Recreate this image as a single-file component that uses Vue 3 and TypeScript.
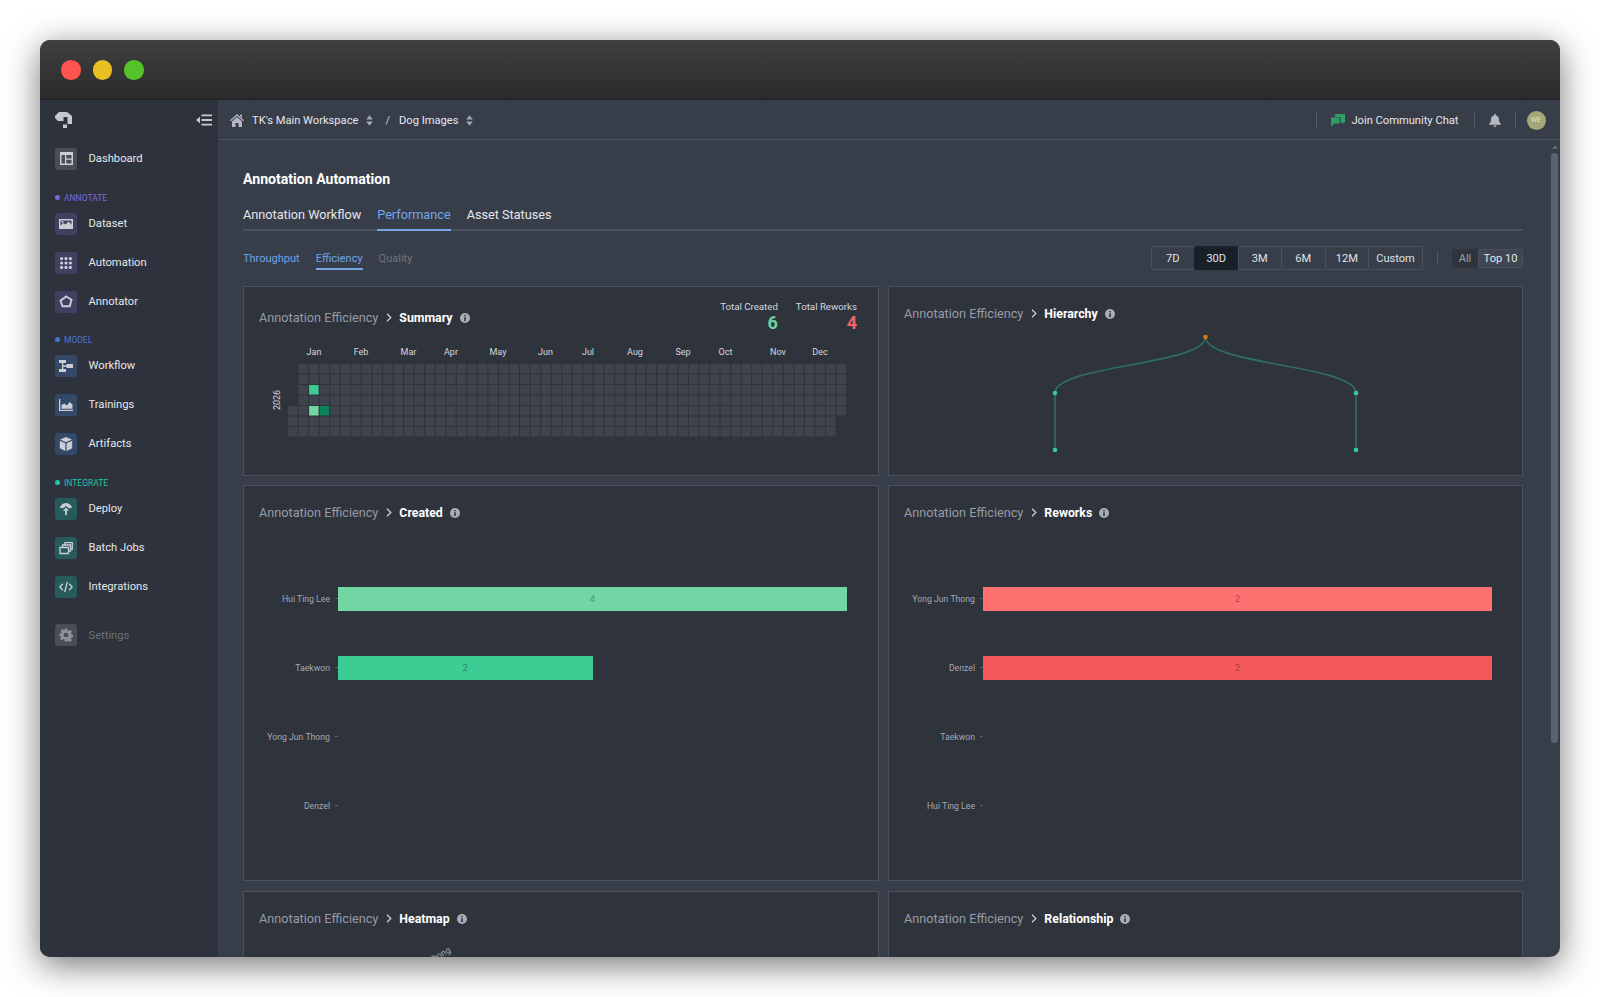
<script setup lang="ts">
interface NavItem { label: string; icon: string; dim?: boolean }
interface NavGroup { title: string; tone: string; items: NavItem[] }

const groups: NavGroup[] = [
  { title: 'ANNOTATE', tone: 'violet', items: [
    { label: 'Dataset', icon: 'image' }, { label: 'Automation', icon: 'dots' }, { label: 'Annotator', icon: 'poly' } ] },
  { title: 'MODEL', tone: 'blue', items: [
    { label: 'Workflow', icon: 'flow' }, { label: 'Trainings', icon: 'area' }, { label: 'Artifacts', icon: 'cube' } ] },
  { title: 'INTEGRATE', tone: 'teal', items: [
    { label: 'Deploy', icon: 'deploy' }, { label: 'Batch Jobs', icon: 'batch' }, { label: 'Integrations', icon: 'code' } ] },
]

const months = [
  ['Jan', 55], ['Feb', 102], ['Mar', 149.5], ['Apr', 192], ['May', 239], ['Jun', 286.5],
  ['Jul', 329], ['Aug', 376], ['Sep', 424], ['Oct', 466.5], ['Nov', 519], ['Dec', 561],
] as [string, number][]

const cellFill: Record<string, string> = { '2-2': '#3dcc93', '2-4': '#72d5a4', '3-4': '#0b8457' }
const cells: { x: number; y: number; fill: string; key: string }[] = []
for (let c = 0; c < 53; c++) {
  for (let r = 0; r < 7; r++) {
    if (c === 0 && r < 4) continue
    if (c === 52 && r > 4) continue
    const key = `${c}-${r}`
    cells.push({ key, x: 29 + c * 10.55, y: 22 + r * 10.5, fill: cellFill[key] || '#3e434e' })
  }
}

const barCharts = [
  { title: 'Created', rows: [
    { name: 'Hui Ting Lee', value: 4, color: '#72d5a4', text: '#4a9c78' },
    { name: 'Taekwon', value: 2, color: '#3dcc93', text: '#2c8a66' },
    { name: 'Yong Jun Thong', value: 0, color: '', text: '' },
    { name: 'Denzel', value: 0, color: '', text: '' } ], max: 4 },
  { title: 'Reworks', rows: [
    { name: 'Yong Jun Thong', value: 2, color: '#ff7070', text: '#b04c50' },
    { name: 'Denzel', value: 2, color: '#f55858', text: '#a83e42' },
    { name: 'Taekwon', value: 0, color: '', text: '' },
    { name: 'Hui Ting Lee', value: 0, color: '', text: '' } ], max: 2 },
]

const ranges = ['7D', '30D', '3M', '6M', '12M', 'Custom']
</script>

<template>
  <div class="page">
    <div class="window">
      <header class="titlebar">
        <span class="light red"></span><span class="light yellow"></span><span class="light green"></span>
      </header>
      <div class="body">
        <aside class="sidebar">
          <div class="brand">
            <svg class="logo" width="18" height="18" viewBox="0 0 18 18" fill="#c4c8cf">
              <path d="M4 1H12L17 5V13H12.500V6H8.500V10H3L0 7V5L4 1ZM8 13.500h4V17H8z" />
            </svg>
            <svg width="16" height="12" viewBox="0 0 16 12" fill="#c4c8cf">
              <path d="M0 6l4-3.2v6.4zM5.5 0.5H16v1.8H5.500zM5.500 5.100H16v1.800H5.500zM5.500 9.700H16v1.800H5.500z" />
            </svg>
          </div>
          <div class="nav-item">
            <span class="nav-icon grey">
              <svg width="13" height="13" viewBox="0 0 13 13" fill="#c9cdd4"><path fill-rule="evenodd" d="M0 0h13v13H0zM1.500 3v8.500H5V3zM6.300 3v3.500h5.200V3zM6.300 7.800v3.700h5.200V7.800z" /></svg>
            </span>
            <span class="nav-label">Dashboard</span>
          </div>
          <section v-for="g in groups" :key="g.title" class="group">
            <div class="group-title" :class="g.tone"><i></i>{{ g.title }}</div>
            <div v-for="it in g.items" :key="it.label" class="nav-item">
              <span class="nav-icon" :class="g.tone">
                <svg width="14" height="14" viewBox="0 0 14 14" fill="#c9cdd4">
                  <path v-if="it.icon === 'image'" fill-rule="evenodd" d="M0 2h14v10H0zM1.500 3.500v5l3-2.500 2 1.500 3-3 3 3v-4zM3.500 4a1 1 0 100 2 1 1 0 000-2z" />
                  <template v-else-if="it.icon === 'dots'">
                    <template v-for="r in 3" :key="r">
                      <circle v-for="c in 3" :key="c" :cx="2.600 + (c - 1) * 4.400" :cy="2.600 + (r - 1) * 4.400" r="1.600" />
                    </template>
                  </template>
                  <path v-else-if="it.icon === 'poly'" d="M7.300 1.500l5.200 3.100-1.700 6.600H3.500L1.500 5.600z" fill="none" stroke="#c9cdd4" stroke-width="1.900" />
                  <path v-else-if="it.icon === 'flow'" d="M0 1h7v3H0zM7.500 5h6.500v4H7.500zM0 10h7v3H0zM3 4h1.300v6H3zM3 6.300h4.500v1.400H3z" />
                  <path v-else-if="it.icon === 'area'" d="M0 1h1.300v10.700H14V13H0zM2.500 10.700V7l2.800-1.500 2.700 2L10.500 4l3 2.500v4.200z" />
                  <path v-else-if="it.icon === 'cube'" d="M7 0l6 2.600L7 5.200 1 2.600zM.8 3.800l5.600 2.400V14L.8 11.300zM13.200 3.800L7.600 6.200V14l5.600-2.700z" />
                  <path v-else-if="it.icon === 'deploy'" d="M7 1C3.800 1 1.500 3.200.7 6.500c1.100-.9 2.200-.9 3.100 0 .5-.5 1-.9 1.500-1L7 3.800l1.700 1.700c.5.100 1 .5 1.500 1 .9-.9 2-.9 3.100 0C12.500 3.200 10.200 1 7 1zM7 5.600L3.900 8.700h2.200V13h1.800V8.700h2.200z" />
                  <path v-else-if="it.icon === 'batch'" fill="none" stroke="#c9cdd4" stroke-width="1.300" d="M1 6.500h8.500v6H1zM3.500 6.500V4h8v6h-2M6 4V1.700h7.300V8h-1.800" />
                  <path v-else-if="it.icon === 'code'" fill="none" stroke="#c9cdd4" stroke-width="1.400" d="M3.800 3.800L.9 7l2.900 3.200M10.200 3.800L13.100 7l-2.900 3.200M8.300 1.800L5.700 12.200" />
                </svg>
              </span>
              <span class="nav-label">{{ it.label }}</span>
            </div>
          </section>
          <div class="nav-item settings">
            <span class="nav-icon grey">
              <svg width="14" height="14" viewBox="0 0 24 24" fill="#8c919a"><path fill-rule="evenodd" d="M10 1h4l.7 3.200 2 .8 2.800-1.800 2.800 2.800-1.800 2.800.8 2 3.200.7v4l-3.200.7-.8 2 1.800 2.800-2.800 2.800-2.800-1.800-2 .8L14 23h-4l-.7-3.200-2-.8-2.800 1.800-2.800-2.800 1.800-2.800-.8-2L.5 14v-4l3.200-.7.8-2L2.700 4.500l2.800-2.800 2.800 1.800 2-.8zM12 8a4 4 0 100 8 4 4 0 000-8z" /></svg>
            </span>
            <span class="nav-label">Settings</span>
          </div>
        </aside>

        <div class="main">
          <div class="topbar">
            <svg class="home" width="14" height="13" viewBox="0 0 14 13" fill="#b4b9c1">
              <path d="M7 0l7 6.300-.8.900L7 1.700.8 7.200 0 6.300zM10 .8h2v3l-2-1.800zM7 3l5 4.400V13H8.500V9h-3v4H2V7.400z" />
            </svg>
            <span class="crumb">TK's Main Workspace</span>
            <svg class="updown" width="7" height="11" viewBox="0 0 8 12" fill="#a3a8b1"><path d="M4 0l3.800 4.800H.2zM4 12L.2 7.200h7.600z" /></svg>
            <span class="slash">/</span>
            <span class="crumb">Dog Images</span>
            <svg class="updown" width="7" height="11" viewBox="0 0 8 12" fill="#a3a8b1"><path d="M4 0l3.800 4.800H.2zM4 12L.2 7.200h7.600z" /></svg>
            <span class="spacer"></span>
            <i class="vbar"></i>
            <svg class="chat" width="14" height="13" viewBox="0 0 14 13" fill="#2f9e64">
              <path d="M4 0h10v8.500h-1.500V10L10.800 8.500H9.500V3H4z" /><path d="M0 3.500h8.500v6H3L0 13z" />
            </svg>
            <span class="crumb chat-text">Join Community Chat</span>
            <i class="vbar"></i>
            <svg class="bell" width="12" height="13" viewBox="0 0 12 13" fill="#b4b9c1">
              <path d="M6 0c.6 0 1 .4 1 1v.5c2 .5 3 2 3 4 0 2 .5 3 2 4.500v.7H0V10c1.500-1.500 2-2.500 2-4.500s1-3.500 3-4V1c0-.6.4-1 1-1zM4.500 11.500h3C7.500 12.400 6.800 13 6 13s-1.500-.6-1.500-1.500z" />
            </svg>
            <i class="vbar"></i>
            <span class="avatar">WE</span>
          </div>

          <div class="scroll">
            <h1 class="page-title">Annotation Automation</h1>
            <nav class="tabs">
              <span>Annotation Workflow</span>
              <span class="on">Performance</span>
              <span>Asset Statuses</span>
            </nav>
            <div class="filters">
              <span class="sub blue">Throughput</span>
              <span class="sub blue on">Efficiency</span>
              <span class="sub muted">Quality</span>
              <span class="spacer"></span>
              <div class="ranges">
                <button v-for="r in ranges" :key="r" class="range" :class="{ active: r === '30D', wide: r === 'Custom' }">{{ r }}</button>
              </div>
              <i class="vbar small"></i>
              <div class="scope">
                <span class="scope-all">All</span>
                <span class="scope-top">Top 10</span>
              </div>
            </div>

            <div class="grid">
              <article class="card summary">
                <div class="card-head between">
                  <div class="heading">
                    <span class="crumb-dim">Annotation Efficiency</span>
                    <svg class="chev" width="6" height="9" viewBox="0 0 6 9"><path d="M1 .8L4.800 4.500 1 8.200" fill="none" stroke="#c9cdd4" stroke-width="1.300" /></svg>
                    <b>Summary</b>
                    <svg class="info" width="10" height="10" viewBox="0 0 10 10"><circle cx="5" cy="5" r="5" fill="#a8adb6" /><path d="M4.200 2h1.600v1.300H4.200zM4.200 4.200h1.600V8H4.200z" fill="#2f333c" /></svg>
                  </div>
                  <div class="totals">
                    <div><small>Total Created</small><strong class="good">6</strong></div>
                    <div><small>Total Reworks</small><strong class="bad">4</strong></div>
                  </div>
                </div>
                <svg class="heat" width="600" height="100" viewBox="0 0 600 100">
                  <text v-for="m in months" :key="m[0]" :x="m[1]" y="13" text-anchor="middle" class="month">{{ m[0] }}</text>
                  <text x="0" y="0" text-anchor="middle" class="year" transform="translate(21 58) rotate(-90)">2026</text>
                  <rect v-for="c in cells" :key="c.key" :x="c.x" :y="c.y" width="9.500" height="9.500" :fill="c.fill" />
                </svg>
              </article>

              <article class="card">
                <div class="card-head near">
                  <div class="heading">
                    <span class="crumb-dim">Annotation Efficiency</span>
                    <svg class="chev" width="6" height="9" viewBox="0 0 6 9"><path d="M1 .8L4.800 4.500 1 8.200" fill="none" stroke="#c9cdd4" stroke-width="1.300" /></svg>
                    <b>Hierarchy</b>
                    <svg class="info" width="10" height="10" viewBox="0 0 10 10"><circle cx="5" cy="5" r="5" fill="#a8adb6" /><path d="M4.200 2h1.600v1.300H4.200zM4.200 4.200h1.600V8H4.200z" fill="#2f333c" /></svg>
                  </div>
                </div>
                <svg class="tree" width="634" height="130" viewBox="0 0 634 130">
                  <g fill="none" stroke="#2f6f5c" stroke-width="1.600">
                    <path d="M316.500 7C316.500 35 166 35 166 63" />
                    <path d="M316.500 7C316.500 35 467 35 467 63" />
                    <path d="M166 63V120M467 63V120" />
                  </g>
                  <circle cx="316.500" cy="7" r="2.300" fill="#d9791c" />
                  <circle cx="166" cy="63" r="2.300" fill="#34cc8f" />
                  <circle cx="467" cy="63" r="2.300" fill="#34cc8f" />
                  <circle cx="166" cy="120" r="2.300" fill="#34cc8f" />
                  <circle cx="467" cy="120" r="2.300" fill="#34cc8f" />
                </svg>
              </article>

              <article v-for="chart in barCharts" :key="chart.title" class="card">
                <div class="card-head">
                  <div class="heading">
                    <span class="crumb-dim">Annotation Efficiency</span>
                    <svg class="chev" width="6" height="9" viewBox="0 0 6 9"><path d="M1 .8L4.800 4.500 1 8.200" fill="none" stroke="#c9cdd4" stroke-width="1.300" /></svg>
                    <b>{{ chart.title }}</b>
                    <svg class="info" width="10" height="10" viewBox="0 0 10 10"><circle cx="5" cy="5" r="5" fill="#a8adb6" /><path d="M4.200 2h1.600v1.300H4.200zM4.200 4.200h1.600V8H4.200z" fill="#2f333c" /></svg>
                  </div>
                </div>
                <div class="bars">
                  <div v-for="row in chart.rows" :key="row.name" class="bar-row">
                    <span class="bar-name">{{ row.name }}</span>
                    <i class="tick"></i>
                    <div class="bar-track">
                      <div v-if="row.value" class="bar" :style="{ width: (row.value / chart.max) * 100 + '%', background: row.color, color: row.text }">{{ row.value }}</div>
                    </div>
                  </div>
                </div>
              </article>

              <article class="card last-row">
                <div class="card-head">
                  <div class="heading">
                    <span class="crumb-dim">Annotation Efficiency</span>
                    <svg class="chev" width="6" height="9" viewBox="0 0 6 9"><path d="M1 .8L4.800 4.500 1 8.200" fill="none" stroke="#c9cdd4" stroke-width="1.300" /></svg>
                    <b>Heatmap</b>
                    <svg class="info" width="10" height="10" viewBox="0 0 10 10"><circle cx="5" cy="5" r="5" fill="#a8adb6" /><path d="M4.200 2h1.600v1.300H4.200zM4.200 4.200h1.600V8H4.200z" fill="#2f333c" /></svg>
                  </div>
                </div>
                <span class="axis-label">Yong Jun Thong</span>
              </article>

              <article class="card last-row">
                <div class="card-head">
                  <div class="heading">
                    <span class="crumb-dim">Annotation Efficiency</span>
                    <svg class="chev" width="6" height="9" viewBox="0 0 6 9"><path d="M1 .8L4.800 4.500 1 8.200" fill="none" stroke="#c9cdd4" stroke-width="1.300" /></svg>
                    <b>Relationship</b>
                    <svg class="info" width="10" height="10" viewBox="0 0 10 10"><circle cx="5" cy="5" r="5" fill="#a8adb6" /><path d="M4.200 2h1.600v1.300H4.200zM4.200 4.200h1.600V8H4.200z" fill="#2f333c" /></svg>
                  </div>
                </div>
              </article>
            </div>

            <div class="scrollbar"><i class="arrow"></i><i class="thumb"></i></div>
          </div>
        </div>
      </div>
    </div>
  </div>
</template>

<style scoped>
.page {
  height: 997px;
  box-sizing: border-box;
  padding: 40px;
  background: #fff;
  overflow: hidden;
  font-family: Roboto, "Liberation Sans", sans-serif;
  color: #e4e7ec;
}
.window {
  height: 917px;
  border-radius: 10px;
  overflow: hidden;
  box-shadow: 0 8px 34px rgba(0, 0, 0, 0.55);
  display: flex;
  flex-direction: column;
  background: #383e49;
}
.titlebar {
  height: 60px;
  flex: none;
  box-sizing: border-box;
  padding: 1px 0 0 21px;
  display: flex;
  align-items: center;
  gap: 12px;
  background: linear-gradient(#404040, #2b2b2b);
  border-bottom: 1px solid #1f2126;
}
.light { width: 19.500px; height: 19.500px; border-radius: 50%; }
.red { background: #ff5350; }
.yellow { background: #e9bf22; }
.green { background: #53c22b; }
.body { flex: 1; display: flex; min-height: 0; }

.sidebar {
  width: 178px;
  flex: none;
  box-sizing: border-box;
  background: #2e323c;
  padding: 0 6px 0 15px;
}
.brand {
  height: 39px;
  display: flex;
  align-items: center;
  justify-content: space-between;
}
.nav-item { height: 39px; display: flex; align-items: center; gap: 11.500px; }
.nav-icon {
  width: 22px;
  height: 22px;
  flex: none;
  border-radius: 3px;
  display: flex;
  align-items: center;
  justify-content: center;
}
.nav-icon.grey { background: #484d57; }
.nav-icon.violet { background: #433f63; }
.nav-icon.blue { background: #344868; }
.nav-icon.teal { background: #265a5b; }
.nav-label { font-size: 11.200px; color: #e4e7ec; }
.group { margin-top: 13px; }
.group:nth-child(4) { margin-top: 12px; }
.group-title {
  height: 13px;
  display: flex;
  align-items: center;
  gap: 4px;
  font-size: 8.500px;
}
.group-title i { width: 5px; height: 5px; border-radius: 50%; background: currentColor; }
.group-title.violet { color: #7a67e0; }
.group-title.blue { color: #4a74d9; }
.group-title.teal { color: #1fc7a5; }
.settings { margin-top: 9.500px; }
.settings .nav-label { color: #6c717a; }

.main { flex: 1; min-width: 0; display: flex; flex-direction: column; }
.topbar {
  height: 40px;
  flex: none;
  box-sizing: border-box;
  border-bottom: 1px solid #4f5560;
  display: flex;
  align-items: center;
  padding: 1px 14.500px 0 12px;
}
.home { margin-right: 8px; }
.crumb { font-size: 11.150px; color: #e4e7ec; }
.updown { margin-left: 8px; }
.slash { margin: 0 9px 0 12px; font-size: 11.150px; color: #c9cdd4; }
.spacer { flex: 1; }
.vbar { width: 1px; height: 17px; background: #555b66; }
.chat { margin: 0 6px 0 14px; }
.chat-text { margin-right: 15px; }
.bell { margin: 0 14px; }
.avatar {
  margin-left: 11px;
  width: 19px;
  height: 19px;
  border-radius: 50%;
  background: #a3a878;
  color: #dfe2c9;
  font-size: 7px;
  display: flex;
  align-items: center;
  justify-content: center;
}

.scroll {
  position: relative;
  flex: 1;
  min-height: 0;
  overflow: hidden;
  padding: 25px 37px 0 25px;
}
.page-title {
  margin: 0 0 6px;
  height: 28px;
  line-height: 28px;
  font-size: 14.100px;
  font-weight: 700;
  color: #fff;
}
.tabs {
  height: 32px;
  box-sizing: border-box;
  display: flex;
  gap: 16px;
  border-bottom: 2px solid #4b515c;
  font-size: 12.700px;
  color: #e4e7ec;
}
.tabs span { height: 32px; line-height: 31px; box-sizing: border-box; }
.tabs .on { color: #76a7e8; border-bottom: 2px solid #76a7e8; }
.filters {
  height: 24px;
  margin: 15px 0 16px;
  display: flex;
  align-items: center;
  font-size: 11px;
}
.sub {
  height: 24px;
  line-height: 25px;
  margin-right: 16px;
  box-sizing: border-box;
}
.sub.blue { color: #6ea4e8; }
.sub.on { border-bottom: 2px solid #76a7e8; }
.sub.muted { color: #70757e; }
.ranges { display: flex; }
.range {
  width: 44.500px;
  height: 24px;
  padding: 0;
  margin-left: -1px;
  background: transparent;
  border: 1px solid #4b515c;
  border-radius: 2px;
  color: #dfe3e8;
  font: 11.100px Roboto, "Liberation Sans", sans-serif;
}
.range.active { background: #1a2028; border-color: #1a2028; }
.range.wide { width: 55px; }
.vbar.small { height: 13px; margin: 0 14px; }
.scope { display: flex; height: 19px; font-size: 11.100px; }
.scope-all { width: 26px; background: #2f333c; color: #9aa0aa; text-align: center; line-height: 19px; border-radius: 2px 0 0 2px; }
.scope-top { width: 45px; box-sizing: border-box; background: #3f4652; border: 1px solid #4b515c; border-radius: 2px; color: #e4e7ec; text-align: center; line-height: 17px; }

.grid {
  display: grid;
  grid-template-columns: 636px 635px;
  grid-template-rows: 190px 396px 300px;
  column-gap: 9px;
  row-gap: 9px;
}
.card {
  position: relative;
  box-sizing: border-box;
  background: #2f333c;
  border: 1px solid #4b505a;
  min-width: 0;
}
.last-row { margin-top: 1px; }
.card-head {
  height: 26px;
  margin-top: 13px;
  padding: 0 21px 0 15px;
  display: flex;
  align-items: center;
}
.card-head.between { justify-content: space-between; height: 34px; margin-top: 13px; }
.card-head.near { margin-top: 13px; }
.heading { display: flex; align-items: baseline; font-size: 12.700px; }
.crumb-dim { color: #969ca7; }
.chev { margin: 0 7.500px; align-self: center; }
.heading b { font-weight: 700; color: #fff; font-size: 12.300px; }
.info { margin-left: 7px; margin-top: 1px; align-self: center; }
.totals { display: flex; gap: 18px; margin-top: -2px; text-align: right; color: #d4d8de; }
.totals small { display: block; font-size: 9.700px; line-height: 13px; }
.totals strong { display: block; font-size: 18px; line-height: 19px; font-weight: 700; }
.good { color: #6fd3a0; }
.bad { color: #f56565; }
.heat { display: block; margin: 8px 0 0 15px; }
.month { font: 9px Roboto, "Liberation Sans", sans-serif; fill: #d4d8de; }
.year { font: 9px Roboto, "Liberation Sans", sans-serif; fill: #d4d8de; }
.tree { display: block; margin-top: 4px; }
.bars { margin-top: 39px; }
.bar-row {
  height: 69px;
  display: grid;
  grid-template-columns: 86px 8px 509px;
  align-items: center;
}
.bar-name { font-size: 8.700px; color: #a3a9b3; text-align: right; white-space: nowrap; }
.tick { justify-self: end; width: 3px; height: 1px; background: #5c626d; }
.bar-track { height: 24px; }
.bar {
  height: 24px;
  line-height: 24px;
  text-align: center;
  font-size: 9.500px;
}
.axis-label {
  position: absolute;
  right: 428px;
  top: 52px;
  font-size: 8.700px;
  white-space: nowrap;
  color: #a3a9b3;
  transform: rotate(-30deg);
  transform-origin: right center;
}

.scrollbar {
  position: absolute;
  top: 5px;
  right: 2px;
  width: 7px;
  display: flex;
  flex-direction: column;
  align-items: center;
  gap: 4px;
}
.arrow {
  width: 0;
  height: 0;
  border-left: 3.500px solid transparent;
  border-right: 3.500px solid transparent;
  border-bottom: 4px solid #5f6874;
}
.thumb { width: 7px; height: 590px; border-radius: 4px; background: #5a6370; }
</style>
